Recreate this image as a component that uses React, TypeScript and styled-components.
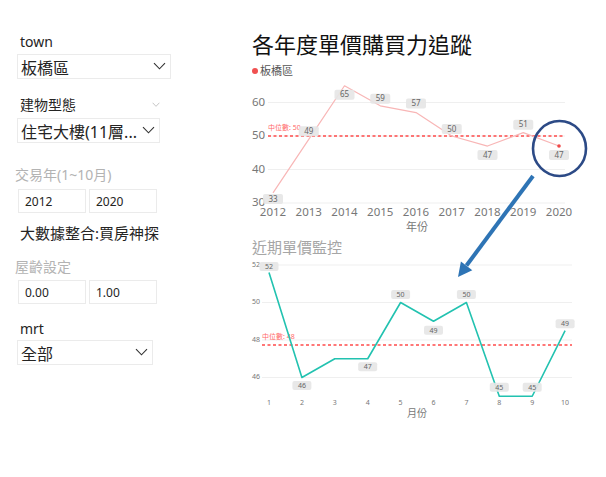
import styled, { createGlobalStyle } from 'styled-components';

const GlobalStyle = createGlobalStyle`
  html, body {
    margin: 0;
    padding: 0;
    background: #ffffff;
  }
  body {
    font-family: 'Noto Sans', 'Noto Sans CJK TC', sans-serif;
    color: #252423;
  }
`;

type Point = { value: number; label?: string; dy: number };

type ChartProps = {
  width: number;
  height: number;
  yTicks: number[];
  yOf: (v: number) => number;
  xOf: (i: number) => number;
  xLabels: string[];
  points: Point[];
  median: number;
  medianLabel: string;
  axisTitle: string;
  lineColor: string;
  lineWidth: number;
  tickFont: number;
  xLabelY: number;
  axisTitleY: number;
  axisTitleSize: number;
  gridFrom: number;
  gridTo: number;
  box: { w: number; h: number; font: number };
  endDot?: boolean;
};

const LineChart = ({
  width,
  height,
  yTicks,
  yOf,
  xOf,
  xLabels,
  points,
  median,
  medianLabel,
  axisTitle,
  lineColor,
  lineWidth,
  tickFont,
  xLabelY,
  axisTitleY,
  axisTitleSize,
  gridFrom,
  gridTo,
  box,
  endDot,
}: ChartProps) => {
  const path = points.map((p, i) => `${xOf(i)},${yOf(p.value)}`).join(' ');
  const last = points.length - 1;
  return (
    <ChartSvg width={width} height={height} viewBox={`0 0 ${width} ${height}`}>
      {yTicks.map((t) => (
        <g key={t}>
          <line x1={gridFrom} x2={gridTo} y1={yOf(t)} y2={yOf(t)} stroke="#efefef" strokeWidth={1} />
          <text x={2} y={yOf(t)} fontSize={tickFont} fill="#777" dominantBaseline="middle">
            {t}
          </text>
        </g>
      ))}
      {xLabels.map((l, i) => (
        <text key={l} x={xOf(i)} y={xLabelY} fontSize={tickFont} fill="#777" textAnchor="middle" dominantBaseline="middle">
          {l}
        </text>
      ))}
      <text x={167} y={axisTitleY} fontSize={axisTitleSize} fill="#777" textAnchor="middle" dominantBaseline="middle">
        {axisTitle}
      </text>
      <line
        x1={gridFrom}
        x2={gridTo}
        y1={yOf(median)}
        y2={yOf(median)}
        stroke="#ff4b4b"
        strokeWidth={1.6}
        strokeDasharray="3 2.5"
      />
      <text x={gridFrom} y={yOf(median) - 6} fontSize={7} fill="#ff6a6a">
        {medianLabel}
      </text>
      <polyline points={path} fill="none" stroke={lineColor} strokeWidth={lineWidth} strokeLinejoin="round" />
      {endDot && <circle cx={xOf(last)} cy={yOf(points[last].value)} r={1.8} fill="#f04848" />}
      {points.map((p, i) => {
        if (!p.label) return null;
        const cx = xOf(i);
        const cy = yOf(p.value) + p.dy;
        return (
          <g key={i}>
            <rect x={cx - box.w / 2} y={cy - box.h / 2} width={box.w} height={box.h} rx={2} fill="#e6e6e6" opacity={0.92} />
            <text x={cx} y={cy + 0.5} fontSize={box.font} fill="#666" textAnchor="middle" dominantBaseline="middle">
              {p.label}
            </text>
          </g>
        );
      })}
    </ChartSvg>
  );
};

const Chevron = ({ size = 11, color = '#333' }: { size?: number; color?: string }) => (
  <svg width={size + 2} height={size * 0.62 + 2} viewBox="-1 -1 13 8.8">
    <polyline points="0,0 5.5,5.8 11,0" fill="none" stroke={color} strokeWidth={1.1} />
  </svg>
);

const yearPoints: Point[] = [
  { value: 33, label: '33', dy: 6 },
  { value: 49, label: '49', dy: -8 },
  { value: 65, label: '65', dy: 9 },
  { value: 59, label: '59', dy: -7 },
  { value: 57, label: '57', dy: -9 },
  { value: 50, label: '50', dy: -7 },
  { value: 47, label: '47', dy: 9 },
  { value: 51, label: '51', dy: -8 },
  { value: 47, label: '47', dy: 9 },
];

const monthPoints: Point[] = [
  { value: 51.6, label: '52', dy: -6 },
  { value: 46, label: '46', dy: 8 },
  { value: 47, dy: 0 },
  { value: 47, label: '47', dy: 8 },
  { value: 50, label: '50', dy: -8 },
  { value: 49, label: '49', dy: 9 },
  { value: 50, label: '50', dy: -8 },
  { value: 45, label: '45', dy: -9 },
  { value: 45, label: '45', dy: -9 },
  { value: 48.5, label: '49', dy: -7 },
];

const App = () => {
  return (
    <Page>
      <GlobalStyle />
      <Sidebar>
        <FieldLabel $top={33}>town</FieldLabel>
        <Select $top={3} $width={154}>
          <span>板橋區</span>
          <Chevron />
        </Select>
        <FieldLabel $top={17}>
          建物型態
          <SmallChevron>
            <Chevron size={6} color="#aaa" />
          </SmallChevron>
        </FieldLabel>
        <Select $top={4} $width={143}>
          <span>住宅大樓(11層...</span>
          <Chevron />
        </Select>
        <MutedLabel $top={23}>交易年(1~10月)</MutedLabel>
        <InputRow $top={5}>
          <NumberBox>2012</NumberBox>
          <NumberBox>2020</NumberBox>
        </InputRow>
        <Caption>大數據整合:買房神探</Caption>
        <MutedLabel $top={15}>屋齡設定</MutedLabel>
        <InputRow $top={4}>
          <NumberBox>0.00</NumberBox>
          <NumberBox>1.00</NumberBox>
        </InputRow>
        <FieldLabel $top={16}>mrt</FieldLabel>
        <Select $top={2} $width={136}>
          <span>全部</span>
          <Chevron />
        </Select>
      </Sidebar>

      <Content>
        <Title>各年度單價購買力追蹤</Title>
        <Legend>
          <Dot />
          板橋區
        </Legend>
        <LineChart
          width={330}
          height={152}
          yTicks={[60, 50, 40, 30]}
          yOf={(v) => 123 - (v - 30) * 3.35}
          xOf={(i) => 23 + i * 35.75}
          xLabels={['2012', '2013', '2014', '2015', '2016', '2017', '2018', '2019', '2020']}
          points={yearPoints}
          median={50}
          medianLabel="中位數: 50"
          axisTitle="年份"
          lineColor="#f8b6b6"
          lineWidth={1.2}
          tickFont={11.5}
          xLabelY={133}
          axisTitleY={148}
          axisTitleSize={11}
          gridFrom={18}
          gridTo={315}
          box={{ w: 20, h: 10, font: 8 }}
          endDot
        />
        <SubTitle>近期單價監控</SubTitle>
        <LineChart
          width={330}
          height={165}
          yTicks={[52, 50, 48, 46]}
          yOf={(v) => 6 + (52 - v) * 18.75}
          xOf={(i) => 19 + i * 32.9}
          xLabels={['1', '2', '3', '4', '5', '6', '7', '8', '9', '10']}
          points={monthPoints}
          median={47.73}
          medianLabel="中位數: 48"
          axisTitle="月份"
          lineColor="#22c2b0"
          lineWidth={1.6}
          tickFont={7}
          xLabelY={144}
          axisTitleY={155}
          axisTitleSize={10}
          gridFrom={12}
          gridTo={322}
          box={{ w: 19, h: 9, font: 7 }}
        />
      </Content>

      <Annotation width={606} height={477} viewBox="0 0 606 477">
        <ellipse cx={559.5} cy={148.5} rx={26.5} ry={27.5} fill="none" stroke="#2c4a86" strokeWidth={2.6} />
        <line x1={533} y1={176} x2={466.5} y2={265.5} stroke="#2e74b5" strokeWidth={4} />
        <polygon points="458,277 472.3,270.2 460.9,261.6" fill="#2e74b5" />
      </Annotation>
    </Page>
  );
};

const Page = styled.div`
  position: relative;
  width: 606px;
  height: 477px;
  display: flex;
  overflow: hidden;
`;

const Sidebar = styled.div`
  width: 252px;
  flex-shrink: 0;
  padding-left: 17px;
  box-sizing: border-box;
  display: flex;
  flex-direction: column;
  align-items: flex-start;
`;

const FieldLabel = styled.div<{ $top: number }>`
  margin-top: ${(p) => p.$top}px;
  margin-left: 3px;
  font-size: 14px;
  line-height: 18px;
  color: #252423;
  display: flex;
  align-items: center;
  width: 140px;
`;

const SmallChevron = styled.span`
  margin-left: auto;
  display: flex;
`;

const MutedLabel = styled.div<{ $top: number }>`
  margin-top: ${(p) => p.$top}px;
  margin-left: -2px;
  font-size: 14px;
  line-height: 18px;
  color: #b3b3b3;
`;

const Select = styled.div<{ $top: number; $width: number }>`
  margin-top: ${(p) => p.$top}px;
  width: ${(p) => p.$width}px;
  height: 25px;
  box-sizing: border-box;
  border: 1px solid #ebebeb;
  padding: 0 4px 0 3px;
  display: flex;
  align-items: center;
  justify-content: space-between;
  font-size: 16px;
  color: #252423;
  white-space: nowrap;
`;

const InputRow = styled.div<{ $top: number }>`
  margin-top: ${(p) => p.$top}px;
  margin-left: 1px;
  display: flex;
  gap: 3px;
`;

const NumberBox = styled.div`
  width: 68px;
  height: 24px;
  box-sizing: border-box;
  border: 1px solid #ebebeb;
  padding-left: 6px;
  display: flex;
  align-items: center;
  font-size: 12px;
  color: #252423;
`;

const Caption = styled.div`
  margin-top: 10px;
  margin-left: 3px;
  font-size: 15px;
  line-height: 20px;
  color: #252423;
`;

const Content = styled.div`
  width: 330px;
  flex-shrink: 0;
  margin-left: -2px;
  display: flex;
  flex-direction: column;
`;

const Title = styled.div`
  margin-top: 30px;
  margin-left: 2px;
  font-size: 22px;
  line-height: 28px;
  color: #111;
  white-space: nowrap;
`;

const Legend = styled.div`
  margin-top: 6px;
  margin-left: 2px;
  display: flex;
  align-items: center;
  gap: 2px;
  font-size: 11px;
  line-height: 14px;
  color: #555;
`;

const Dot = styled.span`
  width: 6px;
  height: 6px;
  border-radius: 50%;
  background: #f05050;
`;

const ChartSvg = styled.svg`
  display: block;
  margin-top: 2px;
  font-family: 'Noto Sans', 'Noto Sans CJK TC', sans-serif;
  overflow: visible;
`;

const SubTitle = styled.div`
  margin-top: 5px;
  margin-left: 2px;
  font-size: 15px;
  line-height: 20px;
  color: #a6a6a6;
`;

const Annotation = styled.svg`
  position: absolute;
  left: 0;
  top: 0;
  pointer-events: none;
`;

export default App;
